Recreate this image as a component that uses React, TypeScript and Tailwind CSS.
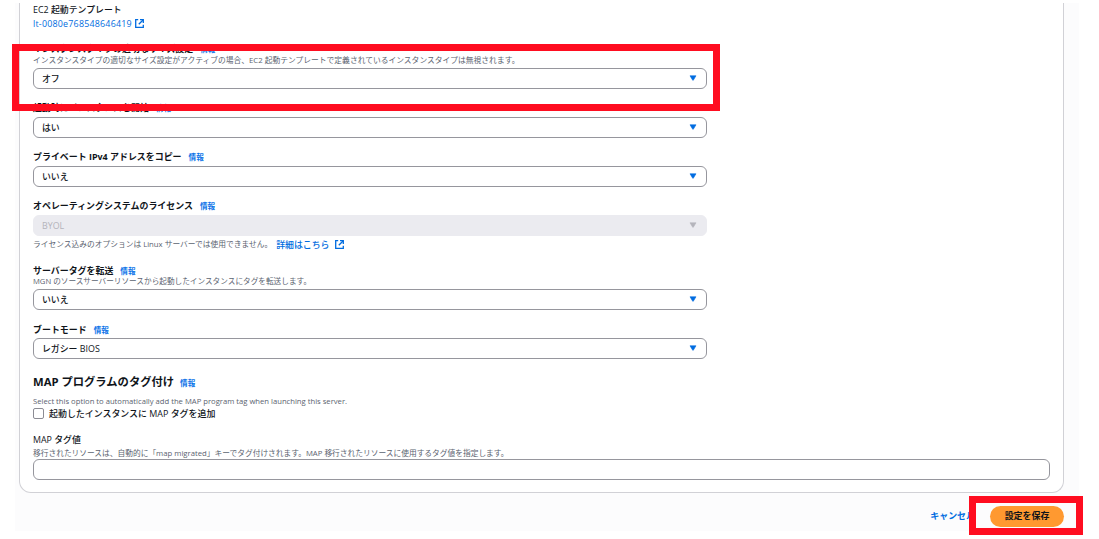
import type { ReactNode } from "react";

function Info() {
  return <a className="ml-[7px] text-[7.6px] font-bold text-[#0972e8]">情報</a>;
}

function ExternalIcon({ className }: { className: string }) {
  return (
    <svg viewBox="0 0 9 9" className={`size-[9px] ${className}`} fill="none" stroke="#006ce0" strokeWidth="1.3">
      <path d="M3.2 0.7H0.7v7.6h7.6V5.8" />
      <path d="M5 0.7h3.3V4" />
      <path d="M3.8 5.2l4.2-4.2" />
    </svg>
  );
}

function Label({ children, className = "" }: { children: ReactNode; className?: string }) {
  return (
    <div className={`flex h-3 items-center text-[8.95px] font-bold leading-3 text-[#0f141a] ${className}`}>
      {children}
      <Info />
    </div>
  );
}

function Hint({ children, className = "" }: { children: ReactNode; className?: string }) {
  return <div className={`flex h-[11px] items-center leading-[11px] text-[#5b6370] ${className}`}>{children}</div>;
}

function Select({ value, disabled, className = "" }: { value: string; disabled?: boolean; className?: string }) {
  return (
    <div
      className={`flex h-[21px] w-[674px] items-center justify-between rounded-[6px] border pl-2 pr-[9px] text-[8.9px] font-medium ${
        disabled ? "border-[#ebebf0] bg-[#ebebf0] text-[#b4b4bb]" : "border-[#96969d] bg-white text-[#0f141a]"
      } ${className}`}
    >
      <span>{value}</span>
      <svg viewBox="0 0 8 6" className="mb-px h-[6px] w-[8px]">
        <path d="M1 0.8h6L4.3 5.2h-0.6z" fill={disabled ? "#b4b4bb" : "#006ce0"} stroke={disabled ? "#b4b4bb" : "#006ce0"} strokeWidth="0.6" />
      </svg>
    </div>
  );
}

export default function App() {
  return (
    <div className="relative h-[539px] w-[1099px] overflow-hidden whitespace-nowrap bg-white pl-[15px] pt-[3px] font-['Open_Sans','Noto_Sans_CJK_JP',sans-serif]" lang="ja">
      <div className="h-[528px] w-[1064px] bg-[#fcfcfd] pl-1">
        <div className="h-[490px] w-[1045px] rounded-b-[12px] border border-t-0 border-[#d1d1d6] bg-white px-[13px]">
          <div className="flex h-[14px] items-center text-[8.9px] font-medium text-[#0f141a]">EC2 起動テンプレート</div>
          <div className="flex h-[13px] items-center text-[8.9px] font-medium text-[#006ce0]">
            <span className="tracking-[0.22px]">lt-0080e768548646419</span>
            <ExternalIcon className="ml-[3px]" />
          </div>

          <Label className="mt-[13px]">インスタンスタイプの適切なサイズ設定</Label>
          <Hint className="text-[7.77px]">インスタンスタイプの適切なサイズ設定がアクティブの場合、EC2 起動テンプレートで定義されているインスタンスタイプは無視されます。</Hint>
          <Select value="オフ" className="mt-[2px]" />

          <Label className="mt-[13px]">起動時にインスタンスを開始</Label>
          <Select value="はい" className="mt-[3px]" />

          <Label className="mt-[13px]">プライベート IPv4 アドレスをコピー</Label>
          <Select value="いいえ" className="mt-[3px]" />

          <Label className="mt-[13px]">オペレーティングシステムのライセンス</Label>
          <Select value="BYOL" disabled className="mt-[3px]" />
          <Hint className="mt-[3px] text-[7.74px]">
            <span>ライセンス込みのオプションは Linux サーバーでは使用できません。</span>
            <span className="ml-1 text-[8.9px] font-medium text-[#006ce0]">詳細はこちら</span>
            <ExternalIcon className="ml-[6px]" />
          </Hint>

          <Label className="mt-[15px]">サーバータグを転送</Label>
          <Hint className="-mt-px text-[7.65px]">MGN のソースサーバーリソースから起動したインスタンスにタグを転送します。</Hint>
          <Select value="いいえ" className="mt-[2px]" />

          <Label className="mt-[14px]">ブートモード</Label>
          <Select value="レガシー BIOS" className="mt-[2px]" />

          <h2 className="mt-[15px] flex h-[17px] items-center text-[11.3px] font-bold text-[#0f141a]">
            MAP プログラムのタグ付け
            <span className="-ml-px flex pt-[2px]">
              <Info />
            </span>
          </h2>
          <Hint className="mt-[5px] text-[7.66px]">Select this option to automatically add the MAP program tag when launching this server.</Hint>
          <div className="mt-px flex h-[11px] items-center gap-[5px] text-[8.95px] font-medium text-[#0f141a]">
            <span className="size-[11px] rounded-[2px] border border-[#8c8c94] bg-white" />
            起動したインスタンスに MAP タグを追加
          </div>

          <div className="mt-[15px] flex h-3 items-center text-[8.9px] font-medium text-[#0f141a]">MAP タグ値</div>
          <Hint className="mt-[2px] text-[7.73px]">移行されたリソースは、自動的に「map migrated」キーでタグ付けされます。MAP 移行されたリソースに使用するタグ値を指定します。</Hint>
          <div className="h-[21px] w-[1017px] rounded-[6px] border border-[#96969d] bg-white" />
        </div>

        <div className="flex h-[38px] w-[1045px] items-center justify-end pt-[8px] text-[8.95px] font-bold">
          <span className="mr-[15px] text-[#006ce0]">キャンセル</span>
          <button className="h-[21px] w-[74px] rounded-full bg-[#ff9930] text-[#0f141a]">設定を保存</button>
        </div>
      </div>

      {/* highlight frames */}
      <div className="absolute left-[12px] top-[44px] h-[67px] w-[708px] border-[7px] border-[#ff0d20]" />
      <div className="absolute left-[969px] top-[496px] h-[39px] w-[114px] border-[7px] border-[#ff0d20]" />
    </div>
  );
}
